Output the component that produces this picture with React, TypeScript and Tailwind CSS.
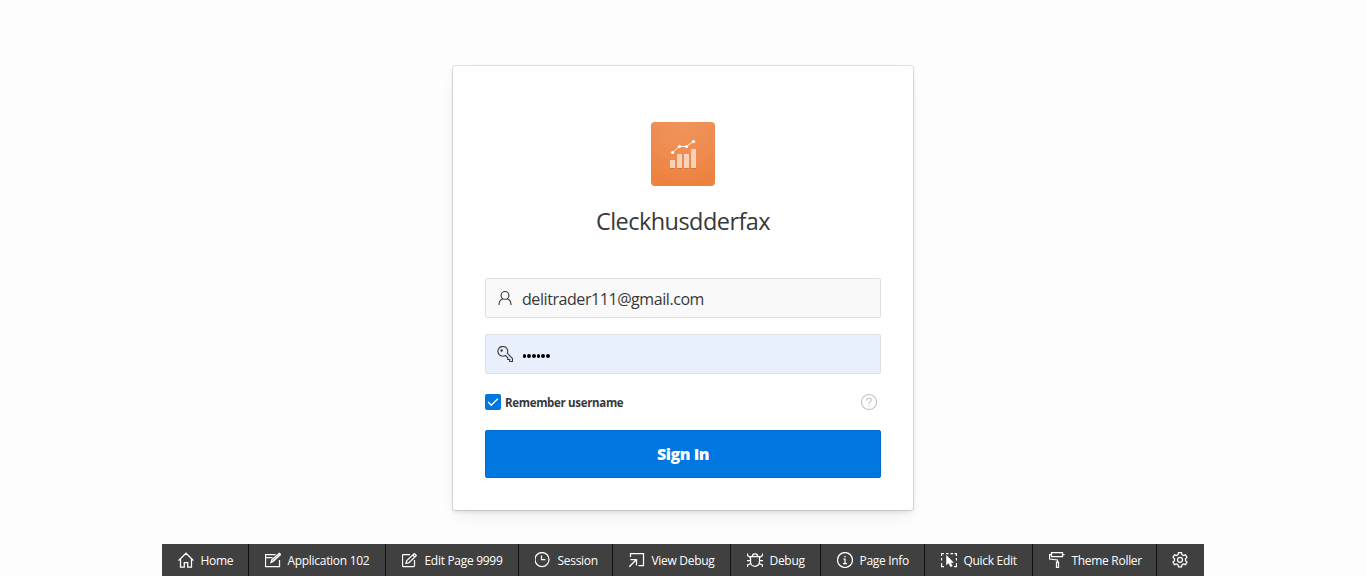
import type { ReactNode } from 'react';

function Glyph({ children, className = '' }: { children: ReactNode; className?: string }) {
  return (
    <svg
      viewBox="0 0 16 16"
      className={`h-4 w-4 shrink-0 ${className}`}
      fill="none"
      stroke="currentColor"
      strokeWidth="1.1"
    >
      {children}
    </svg>
  );
}

const tools: { label: string; width: string; icon: ReactNode }[] = [
  {
    label: 'Home',
    width: 'w-[87px]',
    icon: <path d="M.5 8.600 8 1.200l7.500 7.400M2.500 7v8h3.800v-4.500h3.400V15h3.800V7" />,
  },
  {
    label: 'Application 102',
    width: 'w-[137px]',
    icon: (
      <>
        <path d="M10.500 2.500H.5v12h14V8M.5 5.500h7" />
        <path d="m6 10.500 1-3 7.300-6.200 1.200 1.200L8.400 9.300z" fill="currentColor" fillOpacity=".5" />
      </>
    ),
  },
  {
    label: 'Edit Page 9999',
    width: 'w-[133px]',
    icon: (
      <>
        <path d="M8 2.500H1.500a1 1 0 0 0-1 1v10a1 1 0 0 0 1 1h10a1 1 0 0 0 1-1V8" />
        <path d="m4 11.500.8-3 7.500-7 2 2-7.200 7.200zM10.800 3l2 2" />
      </>
    ),
  },
  {
    label: 'Session',
    width: 'w-[94px]',
    icon: (
      <>
        <circle cx="7" cy="7.500" r="7" />
        <path d="M6.500 3.500v4h4" />
      </>
    ),
  },
  {
    label: 'View Debug',
    width: 'w-[118px]',
    icon: <path d="M1.500 5V1.500h13v12H9.500M.3 14.700l6.700-6.700M1.500 7.500h6v6" />,
  },
  {
    label: 'Debug',
    width: 'w-[90px]',
    icon: (
      <>
        <path d="M3.500 4.500h9v5.500a4.500 4.300 0 0 1-9 0zM5.300 4.500a2.700 2.700 0 0 1 5.400 0" />
        <path d="M.5 1.500v2l3 2M15.500 1.500v2l-3 2M0 8.500h3.500M12.500 8.500H16M.5 15v-2L4 11.500M15.500 15v-2L12 11.500" />
      </>
    ),
  },
  {
    label: 'Page Info',
    width: 'w-[104px]',
    icon: (
      <>
        <circle cx="8" cy="8" r="7.500" />
        <path d="M6.500 7H8v4.500M6 11.500h4M7.300 4.500h1.400" />
      </>
    ),
  },
  {
    label: 'Quick Edit',
    width: 'w-[108px]',
    icon: (
      <>
        <path d="M.5 4V1.500H3M5 1.500h2.500M9.500 1.500H12M13.500 1.500h2V4M15.500 6v2.500M15.500 11v3.500H13M.5 6v2.500M.5 11v3.500H3" />
        <path d="M5.500 3.500v9.300L7.800 11l1.700 3.800 1.800-.8-1.700-3.600h2.900z" fill="currentColor" strokeWidth="0.5" />
      </>
    ),
  },
  {
    label: 'Theme Roller',
    width: 'w-[124px]',
    icon: (
      <>
        <path d="M2.500.5h11v4h-11zM2.500 2.500h-2v4.500l8 1v2M13.500 2.500h2" />
        <path d="M7.500 10h2v5.500h-2z" />
      </>
    ),
  },
];

function Toolbar() {
  return (
    <nav className="flex h-8 bg-[#404040] text-white">
      {tools.map((tool) => (
        <button
          key={tool.label}
          className={`flex shrink-0 items-center gap-[7px] border-r border-[#101010] pl-[15.500px] ${tool.width}`}
        >
          <Glyph className="[stroke-width:1.250]">{tool.icon}</Glyph>
          <span className="pt-0.5 text-xs leading-4 tracking-[-0.3px] whitespace-nowrap">{tool.label}</span>
        </button>
      ))}
      <button className="flex w-[47px] items-center pl-[15px]" aria-label="Settings">
        <Glyph className="[stroke-width:1.250]">
          <path d="M6.500.6h3l.4 2 1.600.9 2-.7 1.500 2.600-1.500 1.400v1.900l1.500 1.400-1.500 2.600-2-.7-1.600.9-.4 2h-3l-.4-2-1.600-.9-2 .7L1 10.100l1.500-1.400V6.800L1 5.400l1.500-2.600 2 .7 1.600-.9z" />
          <circle cx="8" cy="7.800" r="2.500" />
        </Glyph>
      </button>
    </nav>
  );
}

function AppLogo() {
  return (
    <svg viewBox="0 0 64 64" className="h-16 w-16">
      <defs>
        <radialGradient id="tile" cx="0.5" cy="0" r="1">
          <stop offset="0" stopColor="#f0955c" />
          <stop offset="0.5" stopColor="#ee8d51" />
          <stop offset="1" stopColor="#ed813e" />
        </radialGradient>
      </defs>
      <rect width="64" height="64" rx="4" fill="url(#tile)" />
      <path d="M19 46h5v1h-5zM26 46h5v1h-5zM33 46h5v1h-5zM40 46h5v1h-5z" fill="#d97537" />
      <path d="M19 38h5v8h-5zM26 32h5v14h-5zM33 32h5v14h-5zM40 27h5v19h-5z" fill="#f8d1b9" />
      <path d="m21.500 31.500 7-6.500h7l7-5.500" fill="none" stroke="#d97537" strokeOpacity=".5" />
      <path d="m21.500 30.500 7-6h7l7-5" fill="none" stroke="#fff" />
      <g fill="#fff">
        <circle cx="21.500" cy="30.500" r="1.600" />
        <circle cx="28.500" cy="24.500" r="1.600" />
        <circle cx="35.500" cy="24.500" r="1.600" />
        <circle cx="42.500" cy="19.500" r="1.600" />
      </g>
    </svg>
  );
}

export default function App() {
  return (
    <div className="flex h-[576px] w-full flex-col items-center bg-[#fdfdfd] pt-[66px] font-['Open_Sans','Noto_Sans',sans-serif] text-[#383838]">
      <main className="flex h-[444px] w-[460px] flex-col items-center rounded-[2px] bg-white px-8 pt-14 shadow-[0_0_0_1px_rgba(0,0,0,0.1),0_2px_4px_rgba(0,0,0,0.1),0_8px_16px_-4px_rgba(0,0,0,0.08)]">
        <AppLogo />
        <h1 className="mt-[15px] mb-px text-[23.500px] leading-10 tracking-[-0.55px] whitespace-nowrap">
          Cleckhusdderfax
        </h1>
        <div className="mt-9 flex h-10 w-full items-center gap-[9px] rounded-[2px] border border-[#dfdfdf] bg-[#f9f9f9] pl-[11px]">
          <Glyph>
            <circle cx="8" cy="5.400" r="3.900" />
            <path d="M2 15c0-3.500 1.600-5.600 4.200-6.200M14 15c0-3.500-1.600-5.600-4.200-6.200" />
          </Glyph>
          <span className="pt-0.5 text-base leading-5 tracking-[-0.430px]">delitrader111@gmail.com</span>
        </div>
        <div className="mt-4 flex h-10 w-full items-center gap-2 rounded-[2px] border border-[#dfdfdf] bg-[#e8f0fe] pl-[11px]">
          <Glyph>
            <path d="M10.300 7.200 15.500 12.500v3h-2.800v-2h-2v-2L8.300 9.500A4.900 4.900 0 1 1 10.300 7.200z" />
            <circle cx="4.600" cy="4.600" r=".7" />
          </Glyph>
          <div className="mt-1 flex gap-px pl-[1.500px]" aria-label="Password">
            {[0, 1, 2, 3, 4, 5].map((dot) => (
              <span key={dot} className="h-[3.700px] w-[3.700px] rounded-full bg-black" />
            ))}
          </div>
        </div>
        <div className="mt-5 flex h-4 w-full items-center">
          <svg viewBox="0 0 16 16" className="h-4 w-4">
            <rect width="16" height="16" rx="2" fill="#0077e0" />
            <path d="m3.200 8 3 3.200L12.800 4.700" fill="none" stroke="#fff" strokeWidth="1.300" />
          </svg>
          <span className="ml-1 pt-0.5 text-[11.500px] leading-4 font-bold tracking-[-0.330px]">Remember username</span>
          <Glyph className="mr-1 ml-auto text-[#c4c4c4]">
            <circle cx="8" cy="8" r="7.500" />
            <path d="M5.800 6.500C5.800 3.500 10.300 3.700 10.300 6.200 10.300 7.700 8 7.800 8 10M8 11.200v1.300" />
          </Glyph>
        </div>
        <button className="mt-5 h-12 w-full rounded-[2px] border border-[#006bc9] bg-[#0077e0] text-base leading-5 font-extrabold tracking-[-0.45px] text-white">
          Sign In
        </button>
      </main>
      <div className="mt-auto">
        <Toolbar />
      </div>
    </div>
  );
}
